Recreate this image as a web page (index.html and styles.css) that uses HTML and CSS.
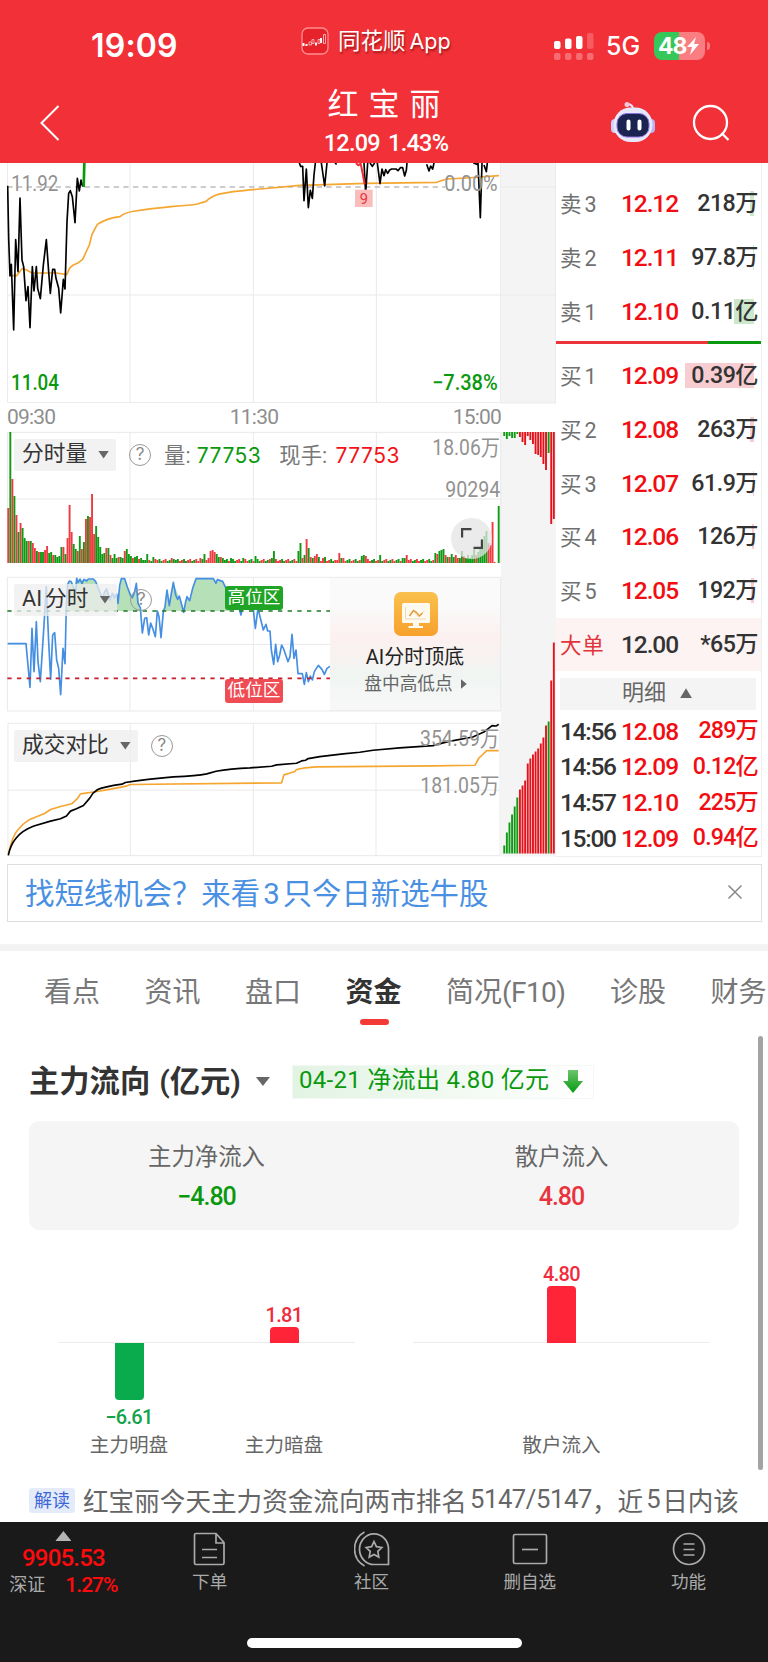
FILE: index.html
```html
<!DOCTYPE html>
<html lang="zh-CN">

<head>
    <meta charset="UTF-8">
    <meta name="viewport" content="width=device-width, initial-scale=1.0">
    <title>红宝丽</title>
    <link rel="stylesheet" href="styles.css">
</head>

<body>
    <header class="header">
        <div class="status">
            <span class="clock">19:09</span>
            <div class="app-name">
                <svg width="28" height="28" viewBox="0 0 28 28" fill="none">
                    <rect x="1" y="1" width="26" height="26" rx="6" fill="#e8222b" stroke="#ff8d90" stroke-width="1.3" />
                    <path d="M2.5 16v3M5.5 17v2M15 15.500v3M20 11v5" stroke="#fff" stroke-width="2" />
                    <path d="M8 15h2.500v3H8zM11 12.500h2v4h-2zM17 12.500h2v4h-2zM22.500 7.500h2v9h-2z" stroke="#ffc9c9" stroke-width=".8" />
                </svg>
                <span>同花顺<span class="latin">App</span></span>
            </div>
            <div class="signal">
                <svg width="40" height="28" viewBox="0 0 40 28" fill="#fff">
                    <rect x="0" y="9" width="6.500" height="8" rx="2" />
                    <rect x="11" y="6.500" width="6.500" height="10.500" rx="2" />
                    <rect x="22" y="4" width="6.500" height="13" rx="2" />
                    <g fill="#f8868a">
                        <rect x="33" y="1" width="6.500" height="16" rx="2" opacity=".5" />
                        <rect x="0" y="21" width="6.500" height="7" rx="2" opacity=".7" />
                        <rect x="11" y="21" width="6.500" height="7" rx="2" opacity=".7" />
                        <rect x="22" y="21" width="6.500" height="7" rx="2" opacity=".7" />
                        <rect x="33" y="21" width="6.500" height="7" rx="2" opacity=".7" />
                    </g>
                </svg>
                <span class="network">5G</span>
                <span class="battery"><span>48</span>
                    <svg width="12" height="18" viewBox="0 0 12 18"><path d="M9 0L0 10h5L3 18l9-11H7z" fill="#fff" /></svg>
                </span>
            </div>
        </div>
        <div class="nav">
            <svg class="back" width="20" height="36" viewBox="0 0 20 36" fill="none"><path d="M18.500 1L1.500 18l17 17" stroke="#fff" stroke-width="2" /></svg>
            <div class="stock">
                <h1>红宝丽</h1>
                <p>12.09 1.43%</p>
            </div>
            <svg class="robot" width="44" height="42" viewBox="0 0 44 42">
                <path d="M22 8q0-4-5-5" fill="none" stroke="#e9e3ff" stroke-width="2" />
                <circle cx="16" cy="3.500" r="2.500" fill="#f3c8d8" />
                <rect x="0" y="18" width="8" height="14" rx="4" fill="#cdd0f8" />
                <rect x="36" y="18" width="8" height="14" rx="4" fill="#b9b2f3" />
                <rect x="2.500" y="6.500" width="39" height="34.500" rx="17" fill="#e7e8fc" />
                <rect x="6" y="12.500" width="32" height="23.500" rx="10" fill="#1b2450" stroke="#8e70dc" stroke-width="1" />
                <path d="M17.500 20.500v7M28.500 20.500v7" stroke="#fff" stroke-width="4" stroke-linecap="round" />
            </svg>
            <svg class="search" width="38" height="38" viewBox="0 0 38 38" fill="none" stroke="#fff" stroke-width="2.300">
                <circle cx="18.500" cy="18.500" r="16.500" />
                <path d="M29.500 29l7 7" />
            </svg>
        </div>
    </header>

    <section class="quote">
        <div class="charts">
            <svg class="price" viewBox="21 24 1482 720">
                <g class="grid">
                    <path d="M22 24V743H1503M390 24V743M760 24V743M1129 24V743M1502 24V743M22 420H1502" />
                </g>
                <path class="dashed" d="M22 96H1335" />
                <path class="avg" d="M33 362L50 362L66 341L80 345L96 354H170L200 359L210 338L220 330L232 325L248 313L268 270L276 238L292 208Q320 190 360 185Q375 172 405 168Q450 161 520 154Q570 151 592 147L618 139Q630 127 655 118Q690 109 780 102L900 91L1100 85L1310 82L1340 72L1400 69L1497 62" />
                <path class="black" d="M23 92L26 250L30 363L34 328L41 525L47 254L54 350L60 129L66 315L71 335L78 437L84 395L90 518L97 335L102 408L109 335L113 400L121 431L130 330L139 254L146 350L151 415L158 343L164 343L168 370L176 400L182 474L190 373L195 402L198 300L201 200L206 115L211 107L217 125L225 203L232 70L238 108L243 75L248 95" />
                <path class="up" d="M251 96L253 24" />
                <path class="black" d="M898 24L902 34L908 34L912 137L919 42L925 158L931 106L937 130L942 60L946 24M964 24L974 93L981 24M1005 24L1010 28M1092 24L1097 115L1103 24M1110 24L1117 34L1124 24M1132 24L1140 86L1146 42L1152 62L1157 44L1163 55L1169 45L1175 42H1188L1194 47L1201 38L1208 38L1214 63L1219 46L1221 24M1280 28L1287 48L1292 33L1298 42L1302 24M1420 24L1430 28L1434 24L1441 188L1446 24M1452 30L1459 50L1462 24" />
                <path class="down" d="M1068 24L1075 31L1082 26L1089 60L1094 88" />
                <rect x="1065" y="104" width="53" height="52" fill="#fbbcbc" />
                <g font-size="44"><text x="1079" y="146" fill="#e8363c">9</text></g>
                <g class="axis-text">
                    <text x="34" y="108" class="light" textLength="141" lengthAdjust="spacingAndGlyphs">11.92</text>
                    <text x="1333" y="107" class="light" textLength="160" lengthAdjust="spacingAndGlyphs">0.00%</text>
                    <text x="33" y="704" class="green" textLength="144" lengthAdjust="spacingAndGlyphs">11.04</text>
                    <text x="1296" y="704" class="green" textLength="197" lengthAdjust="spacingAndGlyphs">−7.38%</text>
                </g>
            </svg>

            <div class="times"><span>09:30</span><span>11:30</span><span>15:00</span></div>

            <div class="panel volume">
                <svg viewBox="21 96 1482 393">
                    <g class="grid"><path d="M22 97H1502M22 96V489M390 96V489M760 96V489M1129 96V489M1502 96V489M22 297H1502" /></g>
                    <g id="volumeBars"></g>
                    <g class="axis-text thin">
                        <text x="1297" y="166" textLength="203" lengthAdjust="spacingAndGlyphs">18.06万</text>
                        <text x="1336" y="292" textLength="165" lengthAdjust="spacingAndGlyphs">90294</text>
                    </g>
                </svg>
                <div class="legend">
                    <span class="chip">分时量<i class="caret"></i></span>
                    <span class="help">?</span>
                    <span class="label">量: <b class="green">77753</b></span>
                    <span class="label hand">现手: <b class="red">77753</b></span>
                </div>
                <span class="expand">
                    <svg width="22" height="22" viewBox="0 0 22 22" fill="none" stroke="#444" stroke-width="2.200"><path d="M1.100 9.500V1.100h9.400M20.900 11.500v8.400h-8.400" /></svg>
                </span>
            </div>

            <div class="panel ai">
                <svg viewBox="21 36 1482 402">
                    <g class="grid"><path d="M22 37H1502V438H22ZM390 37V438M760 37V438M22 238H990" /></g>
                    <path fill="#b6e0b7" d="M198 138L202 62L208 48L214 55L222 68L229 40L240 48L250 44L280 41L292 65L305 100L318 70L332 105L345 85L353 110L364 43L375 43L388 80L400 95L410 60L420 138ZM492 138L501 78L508 122L520 55L536 94L551 140L559 95L569 106L578 70L588 41H640L648 55L656 44L668 50L680 70L690 138Z" />
                    <path class="blue" d="M23 236H78L90 367L96 190L102 320L109 170L114 290L121 350L132 180L139 65L146 230L152 343L158 210L164 203L170 285L176 310L182 389L189 250L195 296L199 120L203 58L208 48L214 50L221 70L228 78L230 40L235 52L240 42L246 56L252 43L260 48L265 42H280L287 50L295 70L301 85L307 102L314 80L320 72L330 105L337 85L343 98L350 87L354 115L359 62L364 41H374L382 66L391 90L397 98L404 80L409 55L414 115L421 128L427 204L434 160L440 158L446 210L452 174L458 190L466 215L472 138L477 155L483 218L490 140L495 125L501 75L508 122L514 85L520 52L527 90L533 103L538 93L551 142L557 110L561 95L569 107L578 70L588 41H640L648 55L652 44L668 49L676 66L686 78L700 105L712 110L723 150L730 115H758L766 190L774 130L780 155L790 195L798 178L803 198H810L814 255L821 298L827 238L833 290L839 270L845 240L851 252L864 290L870 275L876 208L882 280L888 255L894 326H907L913 358L919 323L925 350L931 333L937 345L943 320L955 301L966 313L973 328L981 310L990 304" />
                    <path d="M22 138H990" stroke="#1f7a24" stroke-width="5" stroke-dasharray="13 16" />
                    <path d="M22 340H990" stroke="#c81f2e" stroke-width="5" stroke-dasharray="13 16" />
                </svg>
                <div class="legend">
                    <span class="chip"><span>AI</span>分时<i class="caret"></i></span>
                    <span class="help">?</span>
                </div>
                <span class="zone high">高位区</span>
                <span class="zone low">低位区</span>
                <div class="promo">
                    <svg width="44" height="44" viewBox="0 0 44 44">
                        <defs><linearGradient id="orange" x2="0" y2="1"><stop stop-color="#fac04d" /><stop offset="1" stop-color="#f7a12c" /></linearGradient></defs>
                        <rect width="44" height="44" rx="7" fill="url(#orange)" />
                        <rect x="8" y="11" width="28" height="20" rx="1.500" fill="#fffaf0" />
                        <path d="M19 31h6v3h4v2H14.500v-2H19z" fill="#fffaf0" />
                        <path d="M11.500 15v12H32M15 24l5-5 2.500 4 2 1.500 6-6" fill="none" stroke="#ecd9b5" />
                        <path d="M15.500 24l4-5.500 3 2 3 3.500 3-3" fill="none" stroke="#e39a38" stroke-width="1.500" />
                    </svg>
                    <strong>AI分时顶底</strong>
                    <small>盘中高低点<i></i></small>
                </div>
            </div>

            <div class="panel compare">
                <svg viewBox="21 474 1482 400">
                    <g class="grid"><path d="M22 475H1502V873H22ZM390 475V873M760 475V873M1129 475V873M22 676H1502" /></g>
                    <path class="avg" d="M23 868L33 832Q42 805 55 792Q67 777 84 766L132 746L150 734L180 725L214 717L232 700L240 687L290 680Q350 670 380 663L390 659L845 654L852 630L868 625L885 620L890 614L915 609L950 606L1300 603L1427 601L1438 580L1462 557H1498" />
                    <path class="black" d="M23 872Q30 840 45 822Q63 798 100 784L150 769L180 762L198 754L210 739L228 732L249 722L268 700L278 685L292 674Q310 666 365 658L375 653Q440 643 520 636Q590 633 620 627L648 619Q690 612 750 609L815 604L830 600L890 595L905 588L917 586L925 581L960 575L1030 567L1080 562L1120 556L1200 549L1300 542L1345 530L1420 516L1455 500L1478 482L1490 483L1498 478" />
                    <g class="axis-text thin">
                        <text x="1261" y="543" textLength="239" lengthAdjust="spacingAndGlyphs">354.59万</text>
                        <text x="1262" y="686" textLength="238" lengthAdjust="spacingAndGlyphs">181.05万</text>
                    </g>
                </svg>
                <div class="legend">
                    <span class="chip">成交对比<i class="caret"></i></span>
                    <span class="help">?</span>
                </div>
            </div>
        </div>

        <svg class="auction" viewBox="501 163 55 694">
            <path fill="#f4f4f5" d="M501 163h55v240h-55zM501 432h55v424.500h-55z" />
            <path d="M501 187h55M501 295h55M501 403h55M555.500 163v240" stroke="#eaebec" />
            <g id="auctionBars"></g>
        </svg>

        <div class="book">
            <div class="order"><span>卖3</span><b>12.12</b><em style="--depth: 4px">218万</em></div>
            <div class="order"><span>卖2</span><b>12.11</b><em style="--depth: 1px">97.8万</em></div>
            <div class="order"><span>卖1</span><b>12.10</b><em style="--depth: 20px">0.11亿</em></div>
            <div class="ratio"></div>
            <div class="order buy"><span>买1</span><b>12.09</b><em style="--depth: 69px">0.39亿</em></div>
            <div class="order buy"><span>买2</span><b>12.08</b><em style="--depth: 4px">263万</em></div>
            <div class="order buy"><span>买3</span><b>12.07</b><em style="--depth: 1px">61.9万</em></div>
            <div class="order buy"><span>买4</span><b>12.06</b><em style="--depth: 2px">126万</em></div>
            <div class="order buy"><span>买5</span><b>12.05</b><em style="--depth: 3px">192万</em></div>
            <div class="order big"><span>大单</span><b>12.00</b><em style="--depth: 0px">*65万</em></div>
            <div class="detail-title">明细<i></i></div>
            <div class="trade"><span>14:56</span><b>12.08</b><em>289万</em></div>
            <div class="trade"><span>14:56</span><b>12.09</b><em>0.12亿</em></div>
            <div class="trade"><span>14:57</span><b>12.10</b><em>225万</em></div>
            <div class="trade"><span>15:00</span><b>12.09</b><em>0.94亿</em></div>
        </div>
    </section>

    <div class="banner">
        <span>找短线机会？来看<span class="num">3</span>只今日新选牛股</span>
        <svg width="16" height="16" viewBox="0 0 16 16"><path d="M1.500 1.500l13 13M14.500 1.500l-13 13" stroke="#888" stroke-width="1.500" /></svg>
    </div>

    <nav class="tabs">
        <a>看点</a>
        <a>资讯</a>
        <a>盘口</a>
        <a class="active">资金</a>
        <a>简况<span>(F10)</span></a>
        <a>诊股</a>
        <a>财务</a>
    </nav>

    <main class="funds">
        <div class="funds-head">
            <h2>主力流向<span>(亿元)</span></h2>
            <i class="caret"></i>
            <div class="outflow">
                <span>04-21 净流出 4.80 亿元</span>
                <svg width="20" height="23" viewBox="0 0 20 23">
                    <defs><linearGradient id="arrow" x2="0" y2="1"><stop stop-color="#6cc56c" /><stop offset="1" stop-color="#069a10" /></linearGradient></defs>
                    <path d="M5 0h10v11h5L10 23 0 11h5z" fill="url(#arrow)" />
                </svg>
            </div>
        </div>

        <div class="summary">
            <div><span>主力净流入</span><b class="green">−4.80</b></div>
            <div><span>散户流入</span><b class="rise">4.80</b></div>
        </div>

        <div class="flow">
            <div class="group">
                <div class="col"><div class="above"></div><div class="below"><i style="height: 57px"></i><b>−6.61</b></div><span>主力明盘</span></div>
                <div class="col"><div class="above"><b>1.81</b><i style="height: 16px"></i></div><div class="below"></div><span>主力暗盘</span></div>
            </div>
            <div class="group">
                <div class="col"><div class="above"><b>4.80</b><i style="height: 57px"></i></div><div class="below"></div><span>散户流入</span></div>
            </div>
        </div>

        <p class="reading"><span class="tag">解读</span>红宝丽今天主力资金流向两市排名<span class="num rank">5147/5147</span>，近<span class="num">5</span>日内该</p>
        <div class="scrollbar"></div>
    </main>

    <footer class="footer">
        <div class="tools">
            <div class="index">
                <i></i>
                <b>9905.53</b>
                <div><span>深证</span><em>1.27%</em></div>
            </div>
            <div class="tool">
                <svg width="36" height="36" viewBox="0 0 36 36"><path d="M4 2.500h20l8 9V32q0 1.500-1.500 1.500H4Q2.500 33.500 2.500 32V4Q2.500 2.500 4 2.500zM24 3v9h8M10 18.500h15M10 26.500h15" /></svg>
                <span>下单</span>
            </div>
            <div class="tool">
                <svg width="36" height="36" viewBox="0 0 36 36"><path d="M34.500 18V33.500H20.500A14.500 15.300 0 1 1 34.500 18zM10.500 1A19.500 19.500 0 0 0 10.500 35" /><path d="M20 10.500l2.400 5.200 5.400.8-4 3.900 1 5.700-4.800-2.700-4.800 2.700 1-5.700-4-3.900 5.400-.8z" /></svg>
                <span>社区</span>
            </div>
            <div class="tool">
                <svg width="36" height="36" viewBox="0 0 36 36"><rect x="1.500" y="3.500" width="33" height="29" rx="1.500" /><path d="M10 18.500h16" /></svg>
                <span>删自选</span>
            </div>
            <div class="tool">
                <svg width="36" height="36" viewBox="0 0 36 36"><circle cx="18" cy="18" r="15.500" /><path d="M12.500 13h11M12.500 18.500h11M12.500 24h11" /></svg>
                <span>功能</span>
            </div>
        </div>
        <div class="home-bar"></div>
    </footer>

    <script src="charts.js"></script>
</body>

</html>
```

FILE: styles.css
```css
* {
    box-sizing: border-box;
}

body {
    margin: 0;
    width: 768px;
    height: 1662px;
    overflow: hidden;
    background: #fff;
    color: #333;
    font-family: Roboto, "Noto Sans CJK SC", sans-serif;
}

h1,
h2,
p {
    margin: 0;
    font-weight: 400;
}

i,
em {
    font-style: normal;
}

svg {
    display: block;
    flex: none;
}

.green {
    color: #0a990e;
    fill: #0a990e;
}

.red {
    color: #f2121a;
}

.rise {
    color: #e93440;
}

/* header */

.header {
    height: 163px;
    background: #f23037;
    color: #fff;
}

.status {
    display: flex;
    align-items: center;
    height: 82px;
    padding: 10px 59px 0 91px;
}

.clock {
    width: 210px;
    font: 600 32px/32px Inter, sans-serif;
    letter-spacing: .2px;
}

.app-name {
    display: flex;
    align-items: center;
    gap: 9px;
    width: 253px;
    margin-top: -10px;
    font-size: 22.500px;
    line-height: 28px;
    text-shadow: 1px 2px 2px rgba(80, 0, 0, .5);
}

.latin {
    margin-left: 4px;
    font-family: Inter, sans-serif;
    font-size: 21.500px;
}

.signal {
    display: flex;
    align-items: center;
}

.network {
    width: 60px;
    padding-left: 12px;
    font: 500 25px/28px Inter, sans-serif;
}

.battery {
    position: relative;
    display: flex;
    align-items: center;
    width: 51px;
    height: 28px;
    padding-left: 4px;
    border-radius: 8px;
    background: linear-gradient(90deg, #35c759 49%, #f97d81 49%);
    font: 700 23px/28px Inter, sans-serif;
    letter-spacing: -1px;
}

.battery::after {
    content: "";
    position: absolute;
    left: 53px;
    top: 10px;
    width: 3px;
    height: 8px;
    border-radius: 0 3px 3px 0;
    background: #f8777b;
}

.nav {
    display: flex;
    height: 81px;
    padding-left: 40px;
}

.back {
    margin-top: 23px;
}

.stock {
    width: 250px;
    margin: 3px 0 0 201px;
    text-align: center;
}

.stock h1 {
    font-size: 31px;
    line-height: 39px;
    letter-spacing: 10px;
    padding-left: 6px;
}

.stock p {
    font-size: 23.500px;
    font-weight: 500;
    line-height: 38px;
    letter-spacing: -.75px;
    word-spacing: 3px;
}

.robot {
    margin: 19px 0 0 100px;
}

.search {
    margin: 22px 0 0 37px;
}

/* charts and order book */

.quote {
    display: flex;
    padding-left: 7px;
    height: 694px;
}

.charts {
    width: 494px;
}

.charts svg {
    fill: none;
}

.price {
    width: 494px;
    height: 240px;
}

.grid {
    stroke: #e9e9ea;
    stroke-width: 3;
}

.dashed {
    stroke: #999;
    stroke-width: 3;
    stroke-dasharray: 16 13;
}

.avg,
.black,
.blue,
.up,
.down {
    stroke-width: 5;
    stroke-linejoin: round;
}

.avg {
    stroke: #f5a62f;
}

.black {
    stroke: #000;
}

.blue {
    stroke: #448ee4;
}

.up {
    stroke: #0a990e;
    stroke-width: 8;
}

.down {
    stroke: #f02c34;
    stroke-width: 6;
}

.axis-text {
    font-size: 64px;
    font-weight: 500;
}

.axis-text text {
    fill: #929292;
}

.axis-text.thin,
.axis-text .light {
    font-weight: 400;
}

.axis-text .green {
    fill: #0a990e;
}

.times {
    display: flex;
    justify-content: space-between;
    height: 29px;
    font-size: 21px;
    line-height: 29px;
    letter-spacing: -.8px;
    color: #8e8e8e;
}

.panel {
    position: relative;
}

.panel > svg {
    width: 494px;
    height: 100%;
    overflow: visible;
}

.volume {
    height: 131px;
}

.ai {
    height: 134px;
    margin-top: 14px;
}

.compare {
    height: 133px;
    margin-top: 12px;
}

.legend {
    position: absolute;
    left: 7px;
    top: 7px;
    display: flex;
    align-items: center;
}

.chip {
    display: flex;
    align-items: center;
    height: 32px;
    padding: 0 7px 0 8px;
    border-radius: 2px;
    background: rgba(238, 238, 239, .75);
    font-size: 21.700px;
    line-height: 29px;
    padding-bottom: 3px;
    color: #333;
}

.chip span {
    margin-right: 3px;
}

.caret {
    width: 11px;
    height: 8px;
    margin-left: 11px;
    background: #666;
    clip-path: polygon(0 0, 100% 0, 50% 100%);
}

.chip .caret {
    margin-top: 2px;
}

.help {
    width: 22px;
    height: 22px;
    margin-left: 13px;
    border: 1.500px solid #999;
    border-radius: 50%;
    font: 17px/19px Inter, sans-serif;
    text-align: center;
    color: #888;
}

.label {
    margin: -3px 0 0 13px;
    font-size: 21.300px;
    color: #777;
    white-space: pre;
}

.label.hand {
    margin-left: 18px;
}

.label b {
    margin-left: 1px;
    font: 400 21px Inter, sans-serif;
    letter-spacing: .5px;
}

.hand b {
    margin-left: 3px;
}

.expand {
    position: absolute;
    left: 444px;
    top: 86px;
    display: grid;
    place-items: center;
    width: 41px;
    height: 41px;
    border-radius: 50%;
    background: rgba(228, 228, 228, .75);
}

.zone {
    position: absolute;
    left: 218px;
    width: 58px;
    height: 24px;
    border-radius: 3px;
    font-size: 17.600px;
    line-height: 23px;
    text-align: center;
    color: #fff;
}

.high {
    top: 9px;
    background: #20a426;
}

.low {
    top: 102px;
    background: #ef4c54;
}

.promo {
    position: absolute;
    left: 323px;
    top: 0;
    display: flex;
    flex-direction: column;
    align-items: center;
    width: 171px;
    height: 134px;
    padding: 14px 0 0 1px;
    border: 1px solid #ececec;
    border-left: 0;
    background: linear-gradient(#fafafa 20%, #fcf0f0 46%, #f0f5f2 75%, #f8f8f8);
}

.promo strong {
    margin: 7px 0 0 -1px;
    font-size: 20px;
    font-weight: 400;
    line-height: 28px;
    color: #222;
}

.promo small {
    display: flex;
    align-items: center;
    font-size: 17.700px;
    line-height: 26px;
    color: #666;
}

.promo small i {
    width: 6px;
    height: 10px;
    margin-left: 8px;
    background: #666;
    clip-path: polygon(0 0, 100% 50%, 0 100%);
}

.auction {
    width: 55px;
    height: 694px;
}

.book {
    width: 206px;
    padding-top: 14px;
    border-right: 1px solid #eee;
    border-bottom: 1px solid #eee;
    font-weight: 500;
}

.order,
.trade {
    display: flex;
    align-items: center;
    height: 53.700px;
    padding: 0 4px 0 4px;
    font-size: 24.500px;
    letter-spacing: -1.100px;
}

.order span {
    width: 61px;
    padding-bottom: 2px;
    font-size: 21.500px;
    font-weight: 400;
    letter-spacing: 3px;
    color: #707070;
}

.order b,
.trade b {
    width: 64px;
    font-weight: 500;
    color: #f20d12;
}

.order em {
    position: relative;
    flex: 1;
    height: 25px;
    margin-right: -1px;
    line-height: 25px;
    display: flex;
    justify-content: flex-end;
    background: linear-gradient(#cbe8cc, #cbe8cc) right 4px top / var(--depth) 100% no-repeat;
    white-space: nowrap;
}

.order em,
.trade em {
    font-size: 23.200px;
    letter-spacing: -.5px;
}

.order.buy em {
    background-image: linear-gradient(#f7cdd2, #f7cdd2);
}

.ratio {
    height: 3.500px;
    margin: 2.500px 0 5px;
    background: linear-gradient(90deg, #ea343a 74%, #0a990e 74%);
}

.order.big {
    background: #fdf3f3;
}

.order.big span {
    color: #e2343c;
    letter-spacing: .8px;
}

.order.big b {
    color: #333;
}

.detail-title {
    display: flex;
    align-items: center;
    height: 32px;
    margin: 7px 5px 3px 4px;
    padding: 0 0 3px 62px;
    background: #f4f4f4;
    font-size: 22px;
    font-weight: 400;
    line-height: 29px;
    color: #666;
}

.detail-title i {
    width: 12px;
    height: 10px;
    margin: 1px 0 0 14px;
    background: #666;
    clip-path: polygon(50% 0, 100% 100%, 0 100%);
}

.trade {
    height: 35.800px;
    padding-right: 3px;
}

.trade span {
    width: 61px;
    letter-spacing: -1.300px;
}

.trade em {
    flex: 1;
    display: flex;
    justify-content: flex-end;
    color: #f20d12;
    letter-spacing: -.8px;
    line-height: 30px;
    padding-bottom: 2px;
    white-space: nowrap;
}

/* banner and tabs */

.banner {
    display: flex;
    align-items: center;
    justify-content: space-between;
    width: 755px;
    height: 58px;
    margin: 7px 0 22px 7px;
    padding: 0 18px 2px 17px;
    border: 1.500px solid #dedede;
    font-size: 29.400px;
    color: #4a90e2;
}

.banner > span {
    padding-bottom: 2px;
}

.banner .num {
    margin: 0 3px;
}

.tabs {
    display: flex;
    gap: 44.500px;
    width: 768px;
    height: 85px;
    padding: 21px 0 0 44px;
    border-top: 7px solid #f3f3f4;
    overflow: hidden;
    font-size: 28px;
    line-height: 41px;
    color: #777;
    white-space: nowrap;
}

.tabs span {
    letter-spacing: -.6px;
}

.tabs .active {
    position: relative;
    font-weight: 700;
    color: #333;
}

.tabs .active::after {
    content: "";
    position: absolute;
    left: 14px;
    top: 47px;
    width: 29px;
    height: 6px;
    border-radius: 3px;
    background: #f43a36;
}

/* capital flow */

.funds {
    position: relative;
    height: 493px;
    padding: 35px 29px 0;
}

.funds-head {
    display: flex;
    align-items: center;
    height: 35px;
}

.funds-head h2 {
    font-size: 30.300px;
    font-weight: 600;
    line-height: 35px;
    white-space: nowrap;
}

.funds-head h2 span {
    margin-left: 9px;
}

.funds-head > .caret {
    width: 14px;
    height: 9px;
    margin: 0 22px 0 15px;
}

.outflow {
    display: flex;
    align-items: center;
    justify-content: space-between;
    width: 302px;
    height: 34px;
    padding: 0 10px 0 6px;
    border: 1px solid #f4f8f4;
    background: linear-gradient(90deg, #e2f3e3, #fff);
    font-size: 24px;
    letter-spacing: .3px;
    line-height: 30px;
    color: #0a990e;
    white-space: nowrap;
}

.outflow span {
    padding-bottom: 3px;
}

.summary {
    display: flex;
    height: 109px;
    margin-top: 22px;
    border-radius: 10px;
    background: #f5f5f5;
    text-align: center;
}

.summary div {
    width: 50%;
    padding-top: 18px;
}

.summary span {
    display: block;
    font-size: 23.400px;
    line-height: 36px;
    color: #666;
}

.summary b {
    display: block;
    font-size: 25px;
    font-weight: 500;
    line-height: 44px;
    letter-spacing: -1px;
}

.flow {
    display: flex;
    gap: 58px;
    height: 245px;
    margin-top: 1px;
    padding-left: 29px;
}

.group {
    display: flex;
    justify-content: space-between;
    width: 297px;
    height: 112px;
    padding: 0 28px;
    border-bottom: 1.500px solid #ededed;
}

.group:last-child {
    justify-content: center;
}

.col {
    width: 86px;
    text-align: center;
}

.col b {
    display: block;
    font-size: 20px;
    font-weight: 500;
    line-height: 24px;
    letter-spacing: -.7px;
}

.col i {
    width: 29px;
}

.above {
    display: flex;
    flex-direction: column;
    align-items: center;
    justify-content: flex-end;
    height: 112px;
    color: #f02c3c;
}

.above i {
    border-radius: 4px 4px 0 0;
    background: #ff2438;
}

.below {
    display: flex;
    flex-direction: column;
    align-items: center;
    height: 88px;
    color: #13a34b;
}

.below i {
    margin-bottom: 5px;
    border-radius: 0 0 4px 4px;
    background: #0aab4c;
}

.col > span {
    display: block;
    font-size: 19.600px;
    line-height: 30px;
    color: #666;
    white-space: nowrap;
}

.reading {
    display: flex;
    align-items: center;
    height: 46px;
    font-size: 25.600px;
    color: #666;
    white-space: nowrap;
}

.reading .num {
    margin: 0 2px 0 3px;
    letter-spacing: -.4px;
}

.reading .rank {
    margin-right: 0;
}

.tag {
    width: 46px;
    height: 25px;
    margin: 2px 8px 0 0;
    border-radius: 3px;
    background: #e4ecfb;
    font-size: 18px;
    line-height: 25px;
    text-align: center;
    color: #3c66d6;
}

.reading .tag {
    margin-right: 8px;
    flex: none;
}

.scrollbar {
    position: absolute;
    right: 5px;
    top: 7px;
    width: 5px;
    height: 434px;
    border-radius: 3px;
    background: #a3a3a3;
}

/* bottom bar */

.footer {
    height: 141px;
    background: #1a1a1a;
    color: #aaa;
}

.tools {
    display: flex;
    height: 116px;
    padding-top: 9px;
}

.index {
    display: flex;
    flex-direction: column;
    align-items: center;
    width: 127px;
    color: #ff0a0d;
}

.index i {
    width: 16px;
    height: 10px;
    background: #b5b5b5;
    clip-path: polygon(50% 0, 100% 100%, 0 100%);
}

.index b {
    font-size: 24px;
    font-weight: 500;
    line-height: 34px;
    letter-spacing: -.8px;
}

.index div {
    display: flex;
    gap: 20px;
    font-size: 21px;
    font-weight: 500;
    line-height: 20px;
    letter-spacing: -1px;
}

.index span {
    font-size: 18px;
    font-weight: 400;
    letter-spacing: 0;
    color: #aaa;
}

.tool {
    display: flex;
    flex-direction: column;
    align-items: center;
    width: 159px;
    font-size: 17.600px;
    line-height: 31px;
}

.tool:nth-child(2) {
    width: 166px;
}

.tool:nth-child(3) {
    width: 158px;
}

.tool svg {
    fill: none;
    stroke: #aaa;
    stroke-width: 1.700;
}

.home-bar {
    width: 275px;
    height: 10px;
    margin-left: 247px;
    border-radius: 5px;
    background: #fff;
}
```

FILE: charts.js
```js
const GREEN = '#0f9a14'
const RED = '#ee3a40'

// positive = red bar, negative = green bar
const opening = [
    55, -131, 84, -67, 48, -31, 40, -35, -25, -22, 22, -22, 20, 15, -12, 11, -11, -11, 13, 17,
    -10, -11, 8, -8, -6, -7, -16, 16, -9, 25, 58, 31, -19, -14, 12, -27, 14, -21, 44, -47,
    46, 69, 29, -37, -26, -16, -9, -10, 15, -15, 8, -5, -9, -5, 6, -6, -5, 12, -14, -9,
    -7, 5, -6, -7, 4, -5, -3, -3, -9, 3,
]
const peaks = {
    70: -2, 71: -6, 72: 4, 80: 5, 81: -4, 94: 5, 96: -9, 98: 5, 99: 12, 100: 13, 101: 11, 102: -9,
    103: -6, 104: 6, 105: -5, 109: -5, 115: -5, 121: -7, 129: -5, 130: -12, 131: 4, 142: -12,
    143: -20, 144: 5, 145: -8, 146: 24, 147: -15, 148: 6, 149: -5, 150: 7, 151: 9, 152: -6,
    154: 5, 155: -6, 161: 3, 162: 10, 163: -5, 164: 5, 173: -7, 174: -8, 175: 7, 182: -8,
    193: -5, 194: -5, 195: 8, 209: -10, 210: 9, 211: -12, 212: -13, 213: -14, 214: 8, 215: -6,
    216: 6, 217: -9, 218: -6, 219: 8, 220: 5, 221: -5, 222: -12, 223: 7, 224: -5, 225: -8,
    226: -5, 227: -8, 228: -14, 229: 8, 230: -11, 231: -14, 232: -20, 233: -27, 234: -32,
    235: 20, 236: 18, 237: 41, 238: 1, 239: 0, 240: -57,
}

function bar(x, y, width, height, fill) {
    return `<rect x="${x}" y="${y}" width="${width}" height="${height}" fill="${fill}" />`
}

let volume = ''
for (let i = 0; i <= 240; i++) {
    const small = (2 + (i * 7) % 3) * (i % 4 < 2 ? 1 : -1)
    const value = opening[i] ?? peaks[i] ?? small
    const height = Math.abs(value) * 3
    volume += bar(22 + i * 6.130, 489 - height, 5.700, height, value > 0 ? RED : GREEN)
}
document.getElementById('volumeBars').innerHTML = volume

const matched = [-4, -7, -4, -6, -6, -2, 5, 10, 13, 4, 8, 12, 22, 23, 25, 32, 38, -21, 92, 87]
const total = [
    -8, -21, -31, -39, -47, -56, 64, 68, 73, 90, 95, 99, 102, 105, 110, 116, 128, -132, 173, 211,
]

let auction = ''
matched.forEach((value, i) => {
    auction += bar(503.300 + i * 2.610, 432, 1.900, Math.abs(value), value > 0 ? '#e5121b' : GREEN)
})
total.forEach((value, i) => {
    const height = Math.abs(value)
    auction += bar(503.300 + i * 2.610, 853.500 - height, 1.900, height, value > 0 ? '#e5121b' : GREEN)
})
document.getElementById('auctionBars').innerHTML = auction
```
